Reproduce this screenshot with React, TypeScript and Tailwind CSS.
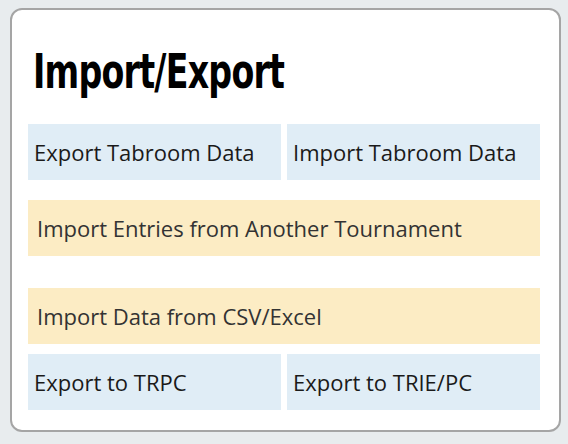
const blue = 'bg-[#e0edf6] text-[#1a1a1a]'
const yellow = 'bg-[#fcecc4] text-[#333333]'

function Btn({ label, tone, className = '' }: { label: string; tone: string; className?: string }) {
  return (
    <a href="#" className={`flex h-[56px] items-center ${tone} ${className}`}>
      {label}
    </a>
  )
}

export default function App() {
  return (
    <div className="min-h-[444px] w-[568px] bg-[#e8ecee] pt-[8px] pl-[10px] font-['Open_Sans',sans-serif]">
      <div className="w-[551px] h-[424px] rounded-[12px] border-2 border-[#a5a5a5] bg-white pl-[16px] pr-[19px]">
        <h2 className="pt-[31px] pb-[3px] text-[48px] font-bold leading-[60px] tracking-[-1px] text-black font-['DejaVu_Sans_Condensed',sans-serif] [font-stretch:condensed] pl-[5px]">
          <span className="inline-block origin-left scale-x-[0.77]">Import/Export</span>
        </h2>
        <div className="mt-[20px] grid grid-cols-2 gap-[6px] text-[22px]">
          <Btn label="Export Tabroom Data" tone={blue} className="pl-[6px]" />
          <Btn label="Import Tabroom Data" tone={blue} className="pl-[6px]" />
        </div>
        <Btn label="Import Entries from Another Tournament" tone={yellow} className="mt-[20px] pl-[9px] text-[22px]" />
        <Btn label="Import Data from CSV/Excel" tone={yellow} className="mt-[32px] pl-[9px] text-[22px]" />
        <div className="mt-[10px] grid grid-cols-2 gap-[6px] text-[22px]">
          <Btn label="Export to TRPC" tone={blue} className="pl-[6px]" />
          <Btn label="Export to TRIE/PC" tone={blue} className="pl-[6px]" />
        </div>
      </div>
    </div>
  )
}
